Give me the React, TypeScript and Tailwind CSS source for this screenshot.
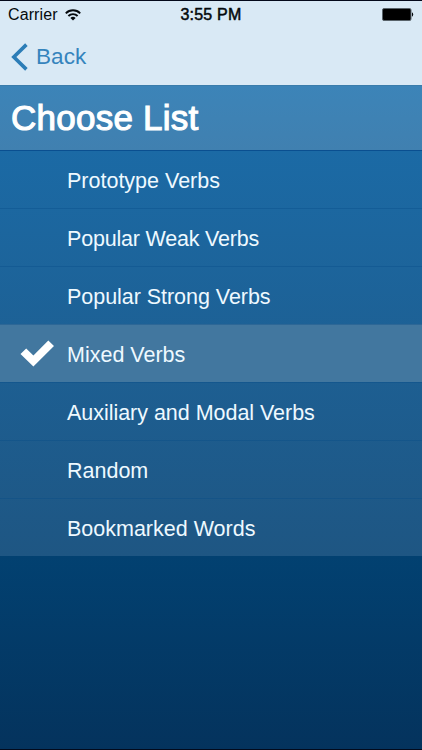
import clsx from 'clsx'

interface VerbList {
  id: string
  label: string
  tracking: string
}

const LISTS: VerbList[] = [
  { id: 'prototype', label: 'Prototype Verbs', tracking: 'tracking-[0px]' },
  { id: 'weak', label: 'Popular Weak Verbs', tracking: 'tracking-[-0.2px]' },
  { id: 'strong', label: 'Popular Strong Verbs', tracking: 'tracking-[-0.04px]' },
  { id: 'mixed', label: 'Mixed Verbs', tracking: 'tracking-[0px]' },
  { id: 'modal', label: 'Auxiliary and Modal Verbs', tracking: 'tracking-[-0.03px]' },
  { id: 'random', label: 'Random', tracking: 'tracking-[0px]' },
  { id: 'bookmarked', label: 'Bookmarked Words', tracking: 'tracking-[0px]' },
]

const SELECTED = 'mixed'

function WifiIcon() {
  return (
    <svg width="16" height="12" viewBox="0 0 16 12" fill="none" stroke="#05090c" strokeWidth="1.9">
      <path d="M0.8 4.3a10.2 10.2 0 0 1 14.4 0" />
      <path d="M3.4 7a6.5 6.5 0 0 1 9.2 0" />
      <path d="M8 11.6L5.4 9a3.7 3.7 0 0 1 5.2 0z" fill="#05090c" stroke="none" />
    </svg>
  )
}

function BatteryIcon() {
  return (
    <svg width="32" height="13" viewBox="0 0 32 13">
      <rect x="0.5" y="0.5" width="28.5" height="12" rx="1.5" fill="#000" stroke="#59636a" />
      <path d="M30 4.3a2.6 2.6 0 0 1 0 4.4z" fill="#05090c" />
    </svg>
  )
}

function StatusBar() {
  return (
    <div className="grid h-7 grid-cols-3 items-center border-t border-[#03081a] pl-2 pr-2 text-[16px] leading-none text-[#05090c]">
      <div className="flex items-center gap-[7px]">
        <span className="pt-px tracking-[0.1px]">Carrier</span>
        <WifiIcon />
      </div>
      <span className="pt-px text-center tracking-[0.2px] [-webkit-text-stroke:0.5px_#05090c]">3:55 PM</span>
      <div className="flex justify-end">
        <BatteryIcon />
      </div>
    </div>
  )
}

function NavBar() {
  return (
    <nav className="flex h-[57px] items-center pl-[11px]">
      <button className="flex items-center gap-[8px] text-[#3584bd]">
        <svg width="17" height="28" viewBox="0 0 17 28" fill="none" stroke="#2c7db7" strokeWidth="3.6">
          <path d="M15.4 1.6L2.8 14l12.6 12.4" />
        </svg>
        <span className="pt-[2px] text-[22.5px] leading-none tracking-[0.1px]">Back</span>
      </button>
    </nav>
  )
}

function ListRow({ list, selected }: { list: VerbList; selected: boolean }) {
  return (
    <li
      className={clsx(
        'flex h-[58px] items-center border-t border-[#064a88]/35 first:border-[#0a4f90]',
        selected ? 'bg-[#42779f]' : 'bg-transparent',
      )}
    >
      <div className="flex w-[67px] shrink-0 pl-5">
        {selected && (
          <svg width="34" height="27" viewBox="0 0 34 27" fill="#fff">
            <path d="M0.5 14L6.2 8.6L13.4 15.4L28.3 0.6L34 6L13.4 26.6z" />
          </svg>
        )}
      </div>
      <span className={clsx('whitespace-nowrap pt-[4px] text-[21.5px] leading-none text-[#eef9ff]', list.tracking)}>
        {list.label}
      </span>
    </li>
  )
}

export default function App() {
  return (
    <div className="flex h-[750px] w-[422px] flex-col overflow-hidden border-b border-[#020a1c] bg-[#033663] font-['Liberation_Sans',Arial,sans-serif]">
      <header className="h-[85px] shrink-0 bg-[#d9e9f5]">
        <StatusBar />
        <NavBar />
      </header>
      <div className="flex h-[65px] shrink-0 items-center border-t border-[#3a7cab] bg-linear-to-b from-[#3c84b8] to-[#4080b0] pl-[11px]">
        <h1 className="pb-[2px] text-[35px] leading-none tracking-[0.25px] text-white [-webkit-text-stroke:1.1px_white]">
          Choose List
        </h1>
      </div>
      <ul className="shrink-0 bg-linear-to-b from-[#1b6aa5] to-[#1e5683]">
        {LISTS.map(list => (
          <ListRow key={list.id} list={list} selected={list.id === SELECTED} />
        ))}
      </ul>
      <div className="flex-1 bg-linear-to-b from-[#024171] to-[#04335d]" />
    </div>
  )
}
